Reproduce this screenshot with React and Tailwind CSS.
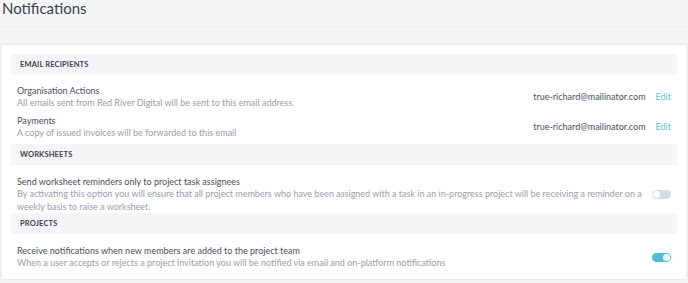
function Toggle({ on }) {
  return (
    <div
      className={
        'relative h-[9px] w-[19px] shrink-0 rounded-full ' + (on ? 'bg-[#4dbfcc]' : 'bg-[#d5dde3]')
      }
    >
      <div
        className={
          'absolute top-[1px] h-[7px] w-[7px] rounded-full bg-white ' + (on ? 'right-[1px]' : 'left-[1px]')
        }
      />
    </div>
  )
}

function SectionHeader({ children }) {
  return (
    <div className="flex h-[21px] items-center bg-[#f4f5f6] px-[9px] text-[7.5px] font-bold tracking-[0.02em] text-[#3d4152] uppercase">
      {children}
    </div>
  )
}

function EmailRow({ title, desc, email }) {
  return (
    <div className="flex items-center px-[6px]">
      <div className="flex-1">
        <p className="text-[9px] leading-[12px] text-[#4a4e5e]">{title}</p>
        <p className="text-[9px] leading-[12px] text-[#9b9eaa]">{desc}</p>
      </div>
      <span className="text-[9px] text-[#4a4e5e]">{email}</span>
      <button className="ml-[10px] text-[9px] text-[#5cc3d2]">Edit</button>
    </div>
  )
}

function ToggleRow({ title, children, on }) {
  return (
    <div className="flex items-center gap-[10px] px-[6px]">
      <div className="flex-1">
        <p className="text-[9px] leading-[12px] text-[#4a4e5e]">{title}</p>
        <p className="text-[9px] leading-[12.5px] text-[#9b9eaa]">{children}</p>
      </div>
      <Toggle on={on} />
    </div>
  )
}

export default function App() {
  return (
    <div className="h-[283px] w-full overflow-hidden bg-[#f4f5f6] font-['Lato',sans-serif]">
      <div className="h-[27px] border-b border-[#eceef0] px-[2px]">
        <h1 className="text-[15px] leading-[17px] text-[#3a3f51]">Notifications</h1>
      </div>
      <div className="mx-[2px] mt-[18px] bg-white px-[9px] pt-[9px] pb-[9px] shadow-[0_0_3px_rgba(0,0,0,0.12)]">
        <SectionHeader>Email Recipients</SectionHeader>
        <div className="mt-[10px] space-y-[6px]">
          <EmailRow
            title="Organisation Actions"
            desc="All emails sent from Red River Digital will be sent to this email address."
            email="true-richard@mailinator.com"
          />
          <EmailRow
            title="Payments"
            desc="A copy of issued invoices will be forwarded to this email"
            email="true-richard@mailinator.com"
          />
        </div>
        <div className="mt-[5px]">
          <SectionHeader>Worksheets</SectionHeader>
        </div>
        <div className="mt-[11px]">
          <ToggleRow title="Send worksheet reminders only to project task assignees">
            By activating this option you will ensure that all project members who have been assigned with a
            task in an in-progress project will be receiving a reminder on a
            <br />
            weekly basis to raise a worksheet.
          </ToggleRow>
        </div>
        <SectionHeader>Projects</SectionHeader>
        <div className="mt-[11px]">
          <ToggleRow title="Receive notifications when new members are added to the project team" on>
            When a user accepts or rejects a project invitation you will be notified via email and on-platform
            notifications
          </ToggleRow>
        </div>
      </div>
    </div>
  )
}
